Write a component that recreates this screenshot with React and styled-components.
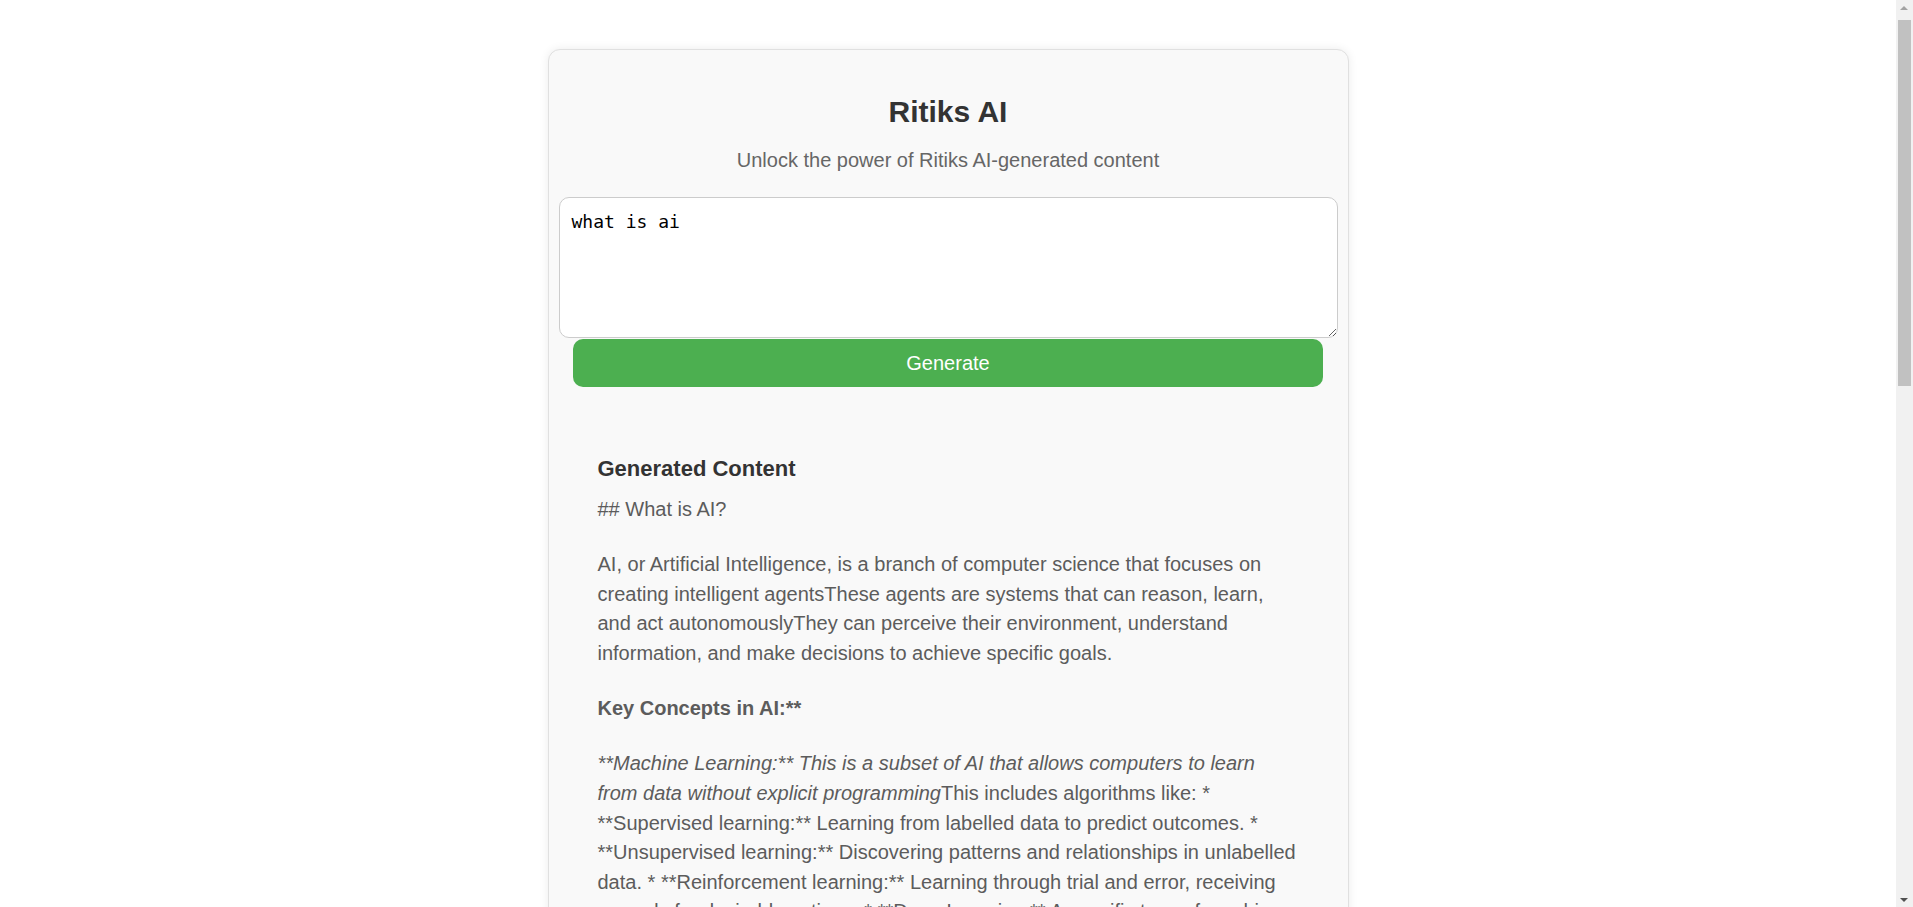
import React from "react";
import styled, { createGlobalStyle } from "styled-components";

const GlobalStyle = createGlobalStyle`
  html {
    scrollbar-width: none;
  }
  body {
    margin: 0;
    background: #ffffff;
    font-family: "Liberation Sans", Arial, sans-serif;
  }
`;

const Page = styled.div`
  display: flex;
  justify-content: center;
  padding: 49px 17px 50px 0;
`;

const Card = styled.main`
  box-sizing: border-box;
  width: 801px;
  padding: 0 10px 20px;
  background: #f9f9f9;
  border: 1px solid #e0e0e0;
  border-radius: 12px;
  box-shadow: 0 0 10px rgba(0, 0, 0, 0.08);
  display: flex;
  flex-direction: column;
  align-items: center;
`;

const Title = styled.h1`
  margin: 44px 0 0;
  font-size: 30px;
  line-height: 36px;
  font-weight: 700;
  color: #333333;
  text-align: center;
`;

const Subtitle = styled.p`
  margin: 18px 0 0;
  font-size: 20px;
  line-height: 24px;
  color: #666666;
  text-align: center;
`;

const Prompt = styled.textarea`
  display: block;
  box-sizing: border-box;
  width: 100%;
  height: 141px;
  margin: 25px 0 0;
  padding: 13px 12px;
  border: 1px solid #cccccc;
  border-radius: 10px;
  background: #ffffff;
  font-family: "DejaVu Sans Mono", "Liberation Mono", monospace;
  font-size: 18px;
  line-height: 1.2;
  color: #000000;
  outline: none;
`;

const GenerateButton = styled.button`
  width: 96.2%;
  height: 48px;
  margin-top: 1px;
  border: none;
  border-radius: 10px;
  background: #4caf50;
  color: #ffffff;
  font-family: "Liberation Sans", Arial, sans-serif;
  font-size: 20px;
  cursor: pointer;
`;

const Output = styled.section`
  align-self: stretch;
  margin: 30px 19px 0;
  padding: 20px;
`;

const OutputHeading = styled.h3`
  margin: 19px 0 13px;
  font-size: 22px;
  line-height: 26px;
  font-weight: 700;
  color: #333333;
`;

const Paragraph = styled.p`
  margin: 0 0 25.6px;
  font-size: 20px;
  line-height: 29.6px;
  color: #5c5c5c;
  font-weight: ${(p) => (p.$strong ? 700 : 400)};
`;

const Emph = styled.em`
  font-style: italic;
`;

/* Decorative page scrollbar as in the screenshot */
const ScrollTrack = styled.div`
  position: fixed;
  top: 0;
  right: 0;
  bottom: 0;
  width: 17px;
  background: #f1f1f1;
`;

const ScrollThumb = styled.div`
  position: absolute;
  top: 20px;
  left: 2px;
  right: 2px;
  height: 366px;
  background: #c1c1c1;
`;

const ScrollArrow = styled.div`
  position: absolute;
  left: 4px;
  width: 0;
  height: 0;
  border-left: 4.5px solid transparent;
  border-right: 4.5px solid transparent;
  ${(p) =>
    p.$down
      ? `bottom: 5px; border-top: 4px solid #505050;`
      : `top: 6px; border-bottom: 4px solid #a3a3a3;`}
`;

const content = [
  { text: "## What is AI?" },
  {
    text:
      "AI, or Artificial Intelligence, is a branch of computer science that focuses on creating intelligent agentsThese agents are systems that can reason, learn, and act autonomouslyThey can perceive their environment, understand information, and make decisions to achieve specific goals.",
  },
  { text: "Key Concepts in AI:**", strong: true },
  {
    em: "**Machine Learning:** This is a subset of AI that allows computers to learn from data without explicit programming",
    text:
      "This includes algorithms like: * **Supervised learning:** Learning from labelled data to predict outcomes. * **Unsupervised learning:** Discovering patterns and relationships in unlabelled data. * **Reinforcement learning:** Learning through trial and error, receiving rewards for desirable actions. * **Deep Learning:** A specific type of machine learning that uses artificial neural networks with multiple layers to analyze complex data.",
  },
  {
    em: "**Natural Language Processing (NLP):** This field focuses on enabling computers to understand, interpret, and generate human language",
    text:
      "Applications include chatbots, machine translation, and sentiment analysis. * **Computer Vision:** Enabling computers to \"see\" and interpret images and videos, used in self-driving cars, facial recognition, and medical image analysis. * **Robotics:** Combining AI with physical machines to create robots that can perform tasks autonomously.",
  },
  { text: "Types of AI:**", strong: true },
  {
    em: "**Narrow or Weak AI:** Designed for specific tasks, like playing chess or recommending products",
    text:
      "Most AI systems today fall into this category. * **General or Strong AI:** Hypothetical AI with human-level intelligence, capable of performing any intellectual task a human can. * **Super AI:** A theoretical AI that surpasses human intelligence in all aspects.",
  },
  { text: "Applications of AI:**", strong: true },
  {
    text:
      "AI is transforming various industries, including: * **Healthcare:** Diagnosis, drug discovery, personalized medicine. * **Finance:** Fraud detection, algorithmic trading, risk management. * **Transportation:** Self-driving cars, traffic optimization. * **Retail:** Personalized recommendations, customer service chatbots. * **Manufacturing:** Predictive maintenance, quality control, automation.",
  },
  { text: "Benefits of AI:**", strong: true },
  {
    em: "**Increased efficiency and productivity:** Automating tasks and optimizing processes",
    text:
      " * **Improved decision-making:** Analyzing vast amounts of data to make better decisions. * **New discoveries and innovations:** Solving complex problems and driving scientific breakthroughs. * **Enhanced customer experiences:** Personalizing interactions and providing better services.",
  },
  { text: "Challenges of AI:**", strong: true },
  {
    em: "**Job displacement:** Automation could lead to job losses in certain sectors",
    text:
      " * **Bias and fairness:** AI systems can inherit biases from the data they are trained on. * **Privacy concerns:** Collecting and using personal data raises ethical concerns. * **Safety and security:** Ensuring AI systems are safe and secure is crucial.",
  },
  {
    text:
      "AI is a rapidly evolving field with the potential to revolutionize many aspects of our livesUnderstanding its capabilities, limitations, and ethical implications is essential for harnessing its power responsibly and building a better future.",
  },
];

export default function App() {
  return (
    <>
      <GlobalStyle />
      <Page>
        <Card>
          <Title>Ritiks AI</Title>
          <Subtitle>Unlock the power of Ritiks AI-generated content</Subtitle>
          <Prompt defaultValue="what is ai" />
          <GenerateButton type="button">Generate</GenerateButton>
          <Output>
            <OutputHeading>Generated Content</OutputHeading>
            {content.map((p, i) => (
              <Paragraph key={i} $strong={p.strong}>
                {p.em && <Emph>{p.em}</Emph>}
                {p.text}
              </Paragraph>
            ))}
          </Output>
        </Card>
      </Page>
      <ScrollTrack aria-hidden="true">
        <ScrollArrow />
        <ScrollThumb />
        <ScrollArrow $down />
      </ScrollTrack>
    </>
  );
}
